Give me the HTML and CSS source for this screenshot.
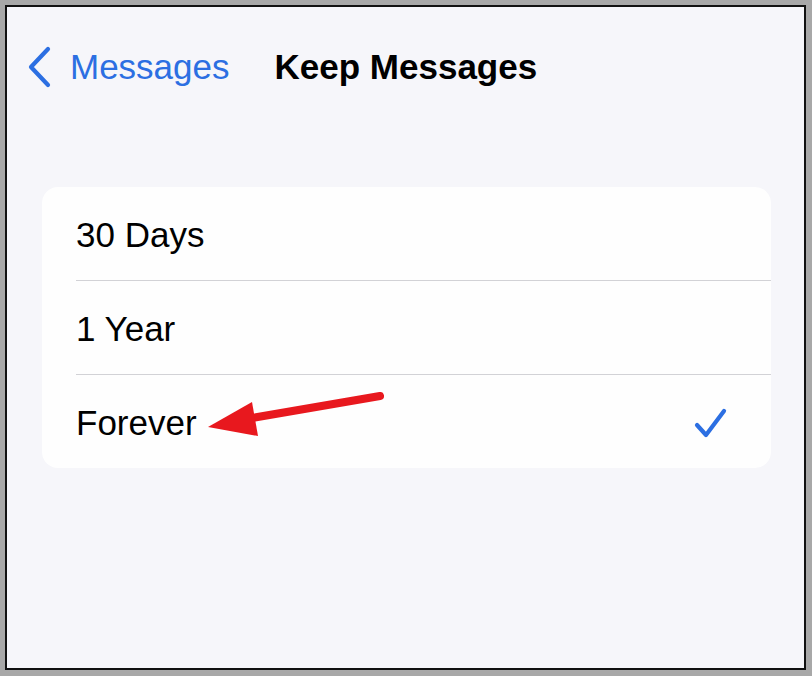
FILE: index.html
```html
<!DOCTYPE html>
<html>
<head>
<meta charset="utf-8">
<link rel="stylesheet" href="styles.css">
</head>
<body>
<div class="frame">
  <div class="nav">
    <div class="back">
      <svg class="chev" width="26" height="42" viewBox="0 0 26 42"><path d="M22 3 L5 21 L22 39" fill="none" stroke="#2c6fe2" stroke-width="4.2" stroke-linecap="round" stroke-linejoin="round"/></svg>
      <span class="back-label">Messages</span>
    </div>
    <div class="title">Keep Messages</div>
  </div>
  <div class="card">
    <div class="row"><span>30 Days</span></div>
    <div class="row"><span>1 Year</span></div>
    <div class="row last"><span>Forever</span>
      <svg class="check" width="36" height="34" viewBox="0 0 36 34"><path d="M4 18 L13 28 L31 4" fill="none" stroke="#2c6fe2" stroke-width="4.2" stroke-linecap="round" stroke-linejoin="round"/></svg>
    </div>
    <svg class="arrow" width="190" height="52" viewBox="0 0 190 52"><line x1="174" y1="5" x2="40" y2="28" stroke="#e8181e" stroke-width="8" stroke-linecap="round"/><polygon points="2,36 46,11 52,45" fill="#e8181e"/></svg>
  </div>
</div>
</body>
</html>
```
FILE: styles.css
```css
html, body {
  margin: 0;
  padding: 0;
}
body {
  background: #a8a8a8;
  width: 812px;
  height: 676px;
  overflow: hidden;
  font-family: "Liberation Sans", Arial, sans-serif;
}
.frame {
  margin: 5px 6px 6px 5px;
  width: 797px;
  height: 661px;
  border: 2px solid #111;
  background: #f6f6fa;
}
.nav {
  display: flex;
  align-items: center;
  height: 60px;
  margin-top: 30px;
  padding-left: 19px;
}
.back {
  display: flex;
  align-items: center;
  gap: 18px;
}
.chev {
  display: block;
}
.back-label {
  color: #2c6fe2;
  font-size: 35px;
}
.title {
  margin-left: 45px;
  font-size: 35px;
  font-weight: bold;
  color: #000;
}
.card {
  position: relative;
  margin: 90px 33px 0 35px;
  background: #fefefe;
  border-radius: 16px;
}
.row {
  display: flex;
  align-items: center;
  justify-content: space-between;
  height: 93px;
  margin-left: 34px;
  padding-right: 42px;
  border-bottom: 1px solid #d2d2d6;
  font-size: 35px;
  color: #000;
}
.row span {
  padding-top: 3px;
}
.row.last {
  border-bottom: none;
}
.check {
  display: block;
  margin-top: 4px;
}
.arrow {
  position: absolute;
  left: 164px;
  top: 204px;
}
```
